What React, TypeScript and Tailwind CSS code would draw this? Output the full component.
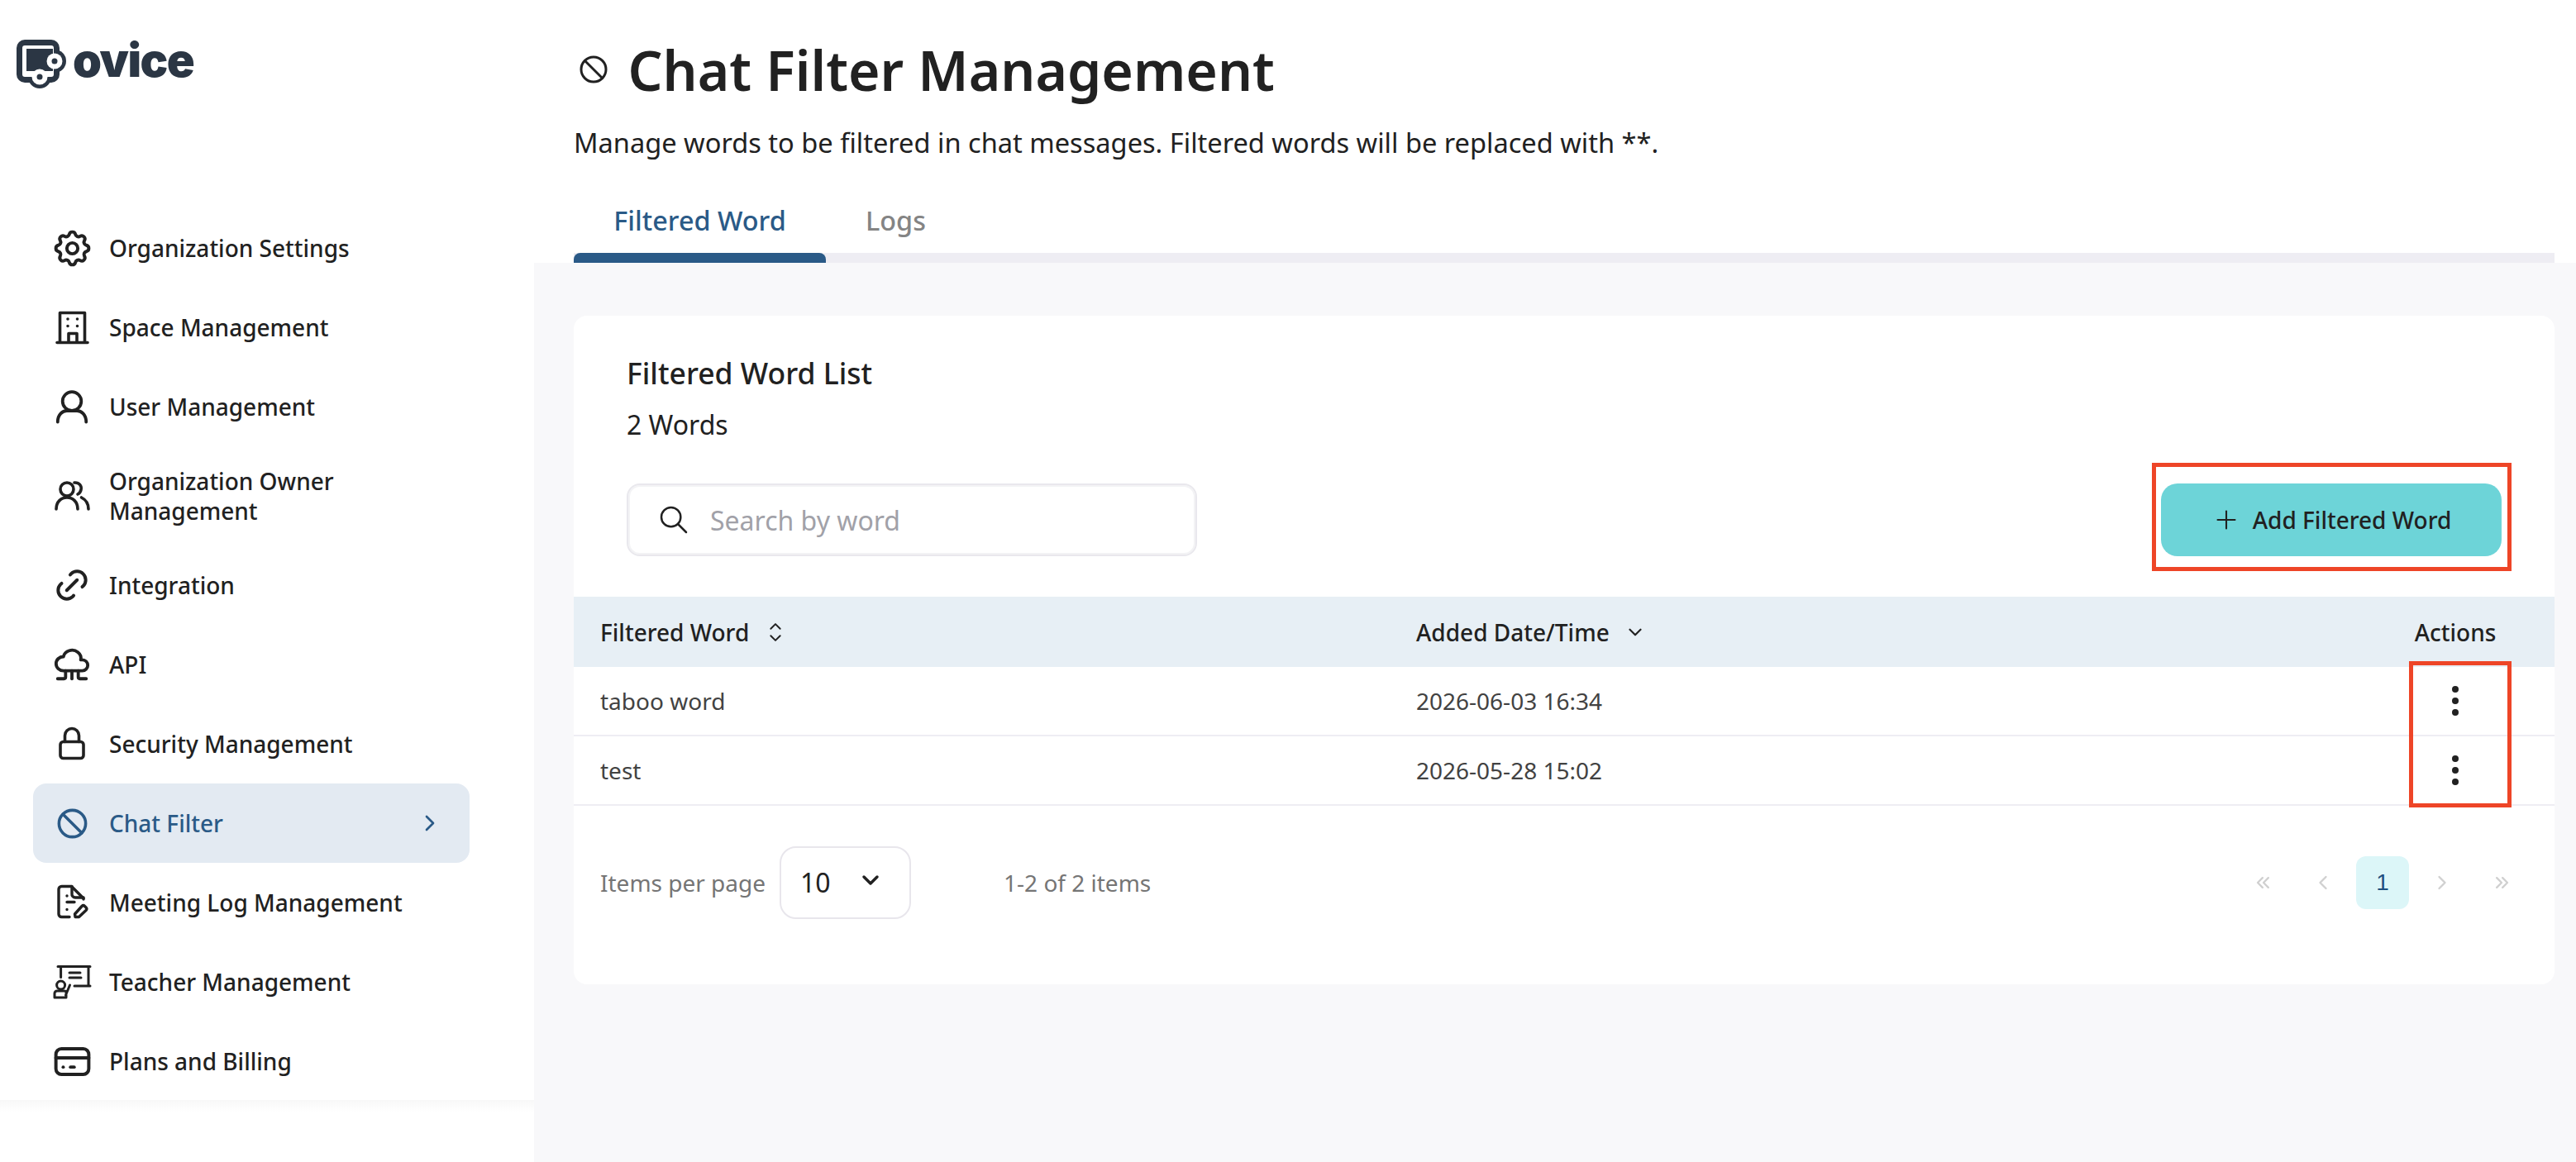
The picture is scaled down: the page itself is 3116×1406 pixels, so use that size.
import React from "react";
import {
  TbSettings, TbLink, TbCloudComputing, TbBan, TbCreditCard,
  TbChevronRight, TbChevronLeft, TbChevronsLeft, TbChevronsRight, TbChevronDown, TbSelector, TbSearch, TbPlus,
} from "react-icons/tb";

const ic = "w-10 h-10 shrink-0 overflow-visible";
const big = "w-[53px] h-[53px] -m-[6.5px] shrink-0";

function BuildingIcon() {
  return (
    <svg viewBox="0 0 40 40" className={ic} fill="none" stroke="currentColor" strokeWidth="3.6" strokeLinecap="round" strokeLinejoin="round">
      <path d="M2 38.500h37M5.500 38.500V2.500h30v36M16 38.500v-11h10v11" />
      <path d="M15 10h.01M26.500 10h.01M15 18.500h.01M26.500 18.500h.01" />
    </svg>
  );
}

function UserIcon() {
  return (
    <svg viewBox="0 0 40 40" className={ic} fill="none" stroke="currentColor" strokeWidth="3.8" strokeLinecap="round" strokeLinejoin="round">
      <circle cx="20" cy="13.500" r="11.300" />
      <path d="M2.800 38.500c0-9 6-13.500 11-13.500h12.400c5 0 11 4.500 11 13.500" />
    </svg>
  );
}

function UsersIcon() {
  return (
    <svg viewBox="0 0 40 40" className={ic} fill="none" stroke="currentColor" strokeWidth="3.6" strokeLinecap="round" strokeLinejoin="round">
      <circle cx="14" cy="12" r="8" />
      <path d="M1 36c0-9 6-14 13-14s13 5 13 14" />
      <path d="M23 4c6-.5 9 4 8 8.500-.5 2.500-2 4.500-4 5.500" />
      <path d="M31.500 22c5 2.500 8.500 7 8.500 14" />
    </svg>
  );
}

function LockIcon() {
  return (
    <svg viewBox="0 0 40 40" className={ic} fill="none" stroke="currentColor" strokeWidth="3.6" strokeLinecap="round" strokeLinejoin="round">
      <rect x="6" y="17.500" width="28" height="20" rx="3.500" />
      <path d="M11.500 17.500V10a8.500 8.500 0 0 1 17 0v7.500" />
    </svg>
  );
}

function LogIcon() {
  return (
    <svg viewBox="0 0 40 40" className={ic} fill="none" stroke="currentColor" strokeWidth="3.4" strokeLinecap="round" strokeLinejoin="round">
      <path d="M17 37.500H7.500A3.500 3.500 0 0 1 4 34V4A3.500 3.500 0 0 1 7.500.500h12l14.500 14.500" />
      <path d="M20 .500v9a4 4 0 0 0 4 4.500h10v2" />
      <path d="M14 12h.01M14 19.500h9M14 28.500h.01" />
      <path d="M24 37.500l-.5-3.500 8.500-9.500a2.500 2.500 0 0 1 3.500 0l1.500 1.500a2.500 2.500 0 0 1 0 3.500l-8.500 8z" />
    </svg>
  );
}

function TeacherIcon() {
  return (
    <svg viewBox="0 0 40 40" className={ic} fill="none" stroke="currentColor" strokeWidth="3" strokeLinecap="round" strokeLinejoin="round">
      <path d="M3 1.500h39M6.600 1.500v13M40 1.500v23.500M23 25h19" />
      <path d="M17 9h13M17 15h14" />
      <circle cx="6.600" cy="24" r="5" />
      <path d="M-1 39v-5a3 3 0 0 1 3-3h9a3 3 0 0 1 2 1v7zM17.500 24l-5 12" />
    </svg>
  );
}

function Logo() {
  return (
    <div className="flex items-start">
      <svg viewBox="0 0 62 62" className="w-[62px] h-[62px] shrink-0">
        <g fill="#2b3644">
          <rect x="0" y="0" width="52" height="52" rx="10" />
          <circle cx="46" cy="26" r="14" />
          <circle cx="28" cy="45" r="14" />
        </g>
        <rect x="7" y="7" width="38" height="38" rx="3" fill="#ffffff" />
        <rect x="12" y="11" width="32" height="27" fill="#2b3644" />
        <circle cx="46" cy="26" r="9.500" fill="#ffffff" />
        <circle cx="28" cy="45" r="9.500" fill="#ffffff" />
        <circle cx="46" cy="26" r="3.500" fill="#2b3644" />
        <circle cx="28" cy="45" r="3.500" fill="#2b3644" />
      </svg>
      <span className="ml-[6px] mt-[-5px] text-[56px] leading-[60px] font-black tracking-[-1.500px] text-[#2b3644] font-['Inter',sans-serif]">ovice</span>
    </div>
  );
}

const nav: { label: React.ReactNode; icon: React.ReactNode; h?: string; active?: boolean }[] = [
  { label: "Organization Settings", icon: <TbSettings className={big} strokeWidth={1.8} /> },
  { label: "Space Management", icon: <BuildingIcon /> },
  { label: "User Management", icon: <UserIcon /> },
  { label: <>Organization Owner<br />Management</>, icon: <UsersIcon />, h: "h-[120px]" },
  { label: "Integration", icon: <TbLink className="w-[50px] h-[50px] -m-[5px] shrink-0" strokeWidth={1.9} /> },
  { label: "API", icon: <TbCloudComputing className="w-[46px] h-[46px] -m-[3px] shrink-0" strokeWidth={2} /> },
  { label: "Security Management", icon: <LockIcon /> },
  { label: "Chat Filter", icon: <TbBan className="w-[43px] h-[43px] -m-[1.500px] shrink-0" strokeWidth={2} />, active: true },
  { label: "Meeting Log Management", icon: <LogIcon /> },
  { label: "Teacher Management", icon: <TeacherIcon /> },
  { label: "Plans and Billing", icon: <TbCreditCard className={big} strokeWidth={1.8} /> },
];

function Sidebar() {
  return (
    <aside className="w-[646px] shrink-0 h-full flex flex-col bg-white">
      <div className="h-[252px] shrink-0 pl-[20px] pt-[48px]">
        <Logo />
      </div>
      <nav className="shrink-0 pl-[40px] pr-[78px] flex flex-col">
        {nav.map((n, i) => (
          <div
            key={i}
            className={`${n.h ?? "h-[96px]"} shrink-0 flex items-center pl-[27px] pr-[32px] rounded-[16px] ${
              n.active ? "bg-[#e3eaf2] text-[#2a5a87]" : "text-[#212121]"
            }`}
          >
            {n.icon}
            <span className="ml-[25px] flex-1 text-[28px] leading-[36px] font-medium">{n.label}</span>
            {n.active && <TbChevronRight className="w-8 h-8" />}
          </div>
        ))}
      </nav>
      <div className="h-[14px] shrink-0 mt-[-1px] bg-gradient-to-b from-[#f8f8f8] to-white" />
    </aside>
  );
}

const Pager = ({ children }: { children: React.ReactNode }) => (
  <div className="w-16 h-16 flex items-center justify-center text-[#d0d0d0]">{children}</div>
);

function Dots() {
  return (
    <svg viewBox="0 0 40 40" className="w-10 h-10">
      <circle cx="20" cy="6" r="4" fill="#212121" />
      <circle cx="20" cy="20" r="4" fill="#212121" />
      <circle cx="20" cy="34" r="4" fill="#212121" />
    </svg>
  );
}

function Card() {
  const rows = [
    ["taboo word", "2026-06-03 16:34"],
    ["test", "2026-05-28 15:02"],
  ];
  return (
    <section className="relative w-full h-[809px] bg-white rounded-[16px] flex flex-col">
      <div className="px-[64px] h-[340px] shrink-0 flex flex-col">
        <h2 className="mt-[44px] text-[35.500px] leading-[50px] font-medium text-[#212121]">Filtered Word List</h2>
        <p className="mt-[16px] text-[32px] leading-[44px] text-[#212121]">2 Words</p>
        <div className="mt-[49px] flex justify-between items-center">
          <div className="w-[690px] h-[88px] rounded-[16px] border-[2px] border-[#e9e8ed] p-[1px] bg-white shadow-[inset_0_0_0_2px_#f3f3f5]">
            <div className="h-full flex items-center pl-[34px] text-[#212121]">
              <TbSearch className="w-[40px] h-[40px]" strokeWidth={1.5} />
              <span className="ml-[24px] mt-[2px] text-[32px] text-[#a1a1a8]">Search by word</span>
            </div>
          </div>
          <button className="w-[412px] h-[88px] rounded-[20px] bg-[#6dd4d8] flex items-center justify-center text-[28px] font-medium text-[#212121]">
            <TbPlus className="w-[36px] h-[36px]" strokeWidth={1.4} />
            <span className="ml-[14px]">Add Filtered Word</span>
          </button>
        </div>
      </div>
      <div className="h-[85px] shrink-0 bg-[#e7eff5] flex items-center text-[28px] font-medium text-[#212121]">
        <div className="w-[987px] pl-[32px] flex items-center">
          Filtered Word
          <TbSelector className="w-[34px] h-[34px] ml-[15px]" strokeWidth={1.4} />
        </div>
        <div className="flex-1 pl-[32px] flex items-center">
          Added Date/Time
          <TbChevronDown className="w-[26px] h-[26px] ml-[18px]" />
        </div>
        <div className="w-[240px] text-center">Actions</div>
      </div>
      {rows.map((r) => (
        <div key={r[0]} className="h-[84px] shrink-0 flex items-center border-b-[2px] border-[#eeedf3] text-[28px] text-[#424242]">
          <div className="w-[987px] pl-[32px]">{r[0]}</div>
          <div className="flex-1 pl-[32px]">{r[1]}</div>
          <div className="w-[240px] flex justify-center"><Dots /></div>
        </div>
      ))}
      <div className="flex-1 flex items-start pt-[49px] pl-[32px] pr-[32px]">
        <div className="h-[88px] flex items-center text-[28px] text-[#757575]">
          <span>Items per page</span>
          <div className="ml-[17px] w-[159px] h-[88px] rounded-[20px] border-[2px] border-[#e8e6ec] flex items-center pl-[23px] text-[32px] text-[#212121]">
            <span>10</span>
            <TbChevronDown className="w-8 h-8 ml-[32px] mt-[-6px]" strokeWidth={2.6} />
          </div>
          <span className="ml-[112px]">1-2 of 2 items</span>
        </div>
        <div className="ml-auto mt-[12px] flex gap-2 items-center">
          <Pager><TbChevronsLeft className="w-7 h-7" /></Pager>
          <Pager><TbChevronLeft className="w-7 h-7" /></Pager>
          <div className="w-16 h-16 rounded-[12px] bg-[#dcf6f8] flex items-center justify-center text-[28px] font-medium text-[#1f4f7f] font-['Liberation_Sans',sans-serif]">1</div>
          <Pager><TbChevronRight className="w-7 h-7" /></Pager>
          <Pager><TbChevronsRight className="w-7 h-7" /></Pager>
        </div>
      </div>
      {/* annotation rectangles laid over the screenshot */}
      <div className="absolute left-[1909px] top-[178px] w-[435px] h-[131px] border-[5px] border-[#ee4527]" />
      <div className="absolute left-[2220px] top-[418px] w-[124px] h-[177px] border-[5px] border-[#ee4527]" />
    </section>
  );
}

export default function App() {
  return (
    <div className="flex w-[3116px] h-[1406px] overflow-hidden bg-white font-['Noto_Sans',sans-serif]">
      <Sidebar />
      <main className="flex-1 min-w-0 flex flex-col">
        <header className="h-[318px] shrink-0 pl-[48px] pr-[26px] flex flex-col">
          <div className="h-[140px] shrink-0 flex items-center pl-[4px] pt-[27px]">
            <TbBan className="w-[40px] h-[40px] text-[#212121]" strokeWidth={1.8} />
            <h1 className="ml-[21.500px] text-[66px] leading-[90px] font-semibold text-[#212121]">Chat Filter Management</h1>
          </div>
          <p className="mt-[2px] h-[62px] shrink-0 text-[32.600px] leading-[62px] text-[#212121]">Manage words to be filtered in chat messages. Filtered words will be replaced with **.</p>
          <div className="mt-auto flex flex-col">
            <div className="flex h-[60px] items-start text-[32.400px] leading-[40px] font-medium">
              <div className="w-[305px] text-center text-[#2a5a87]">Filtered Word</div>
              <div className="pl-[48px] text-[#848484]">Logs</div>
            </div>
            <div className="h-[12px] bg-[#eeedf3]">
              <div className="w-[305px] h-full rounded-t-[8px] bg-[#2a5a87]" />
            </div>
          </div>
        </header>
        <div className="flex-1 bg-[#f8f8fa] pl-[48px] pr-[26px] pt-[64px]">
          <Card />
        </div>
      </main>
    </div>
  );
}
